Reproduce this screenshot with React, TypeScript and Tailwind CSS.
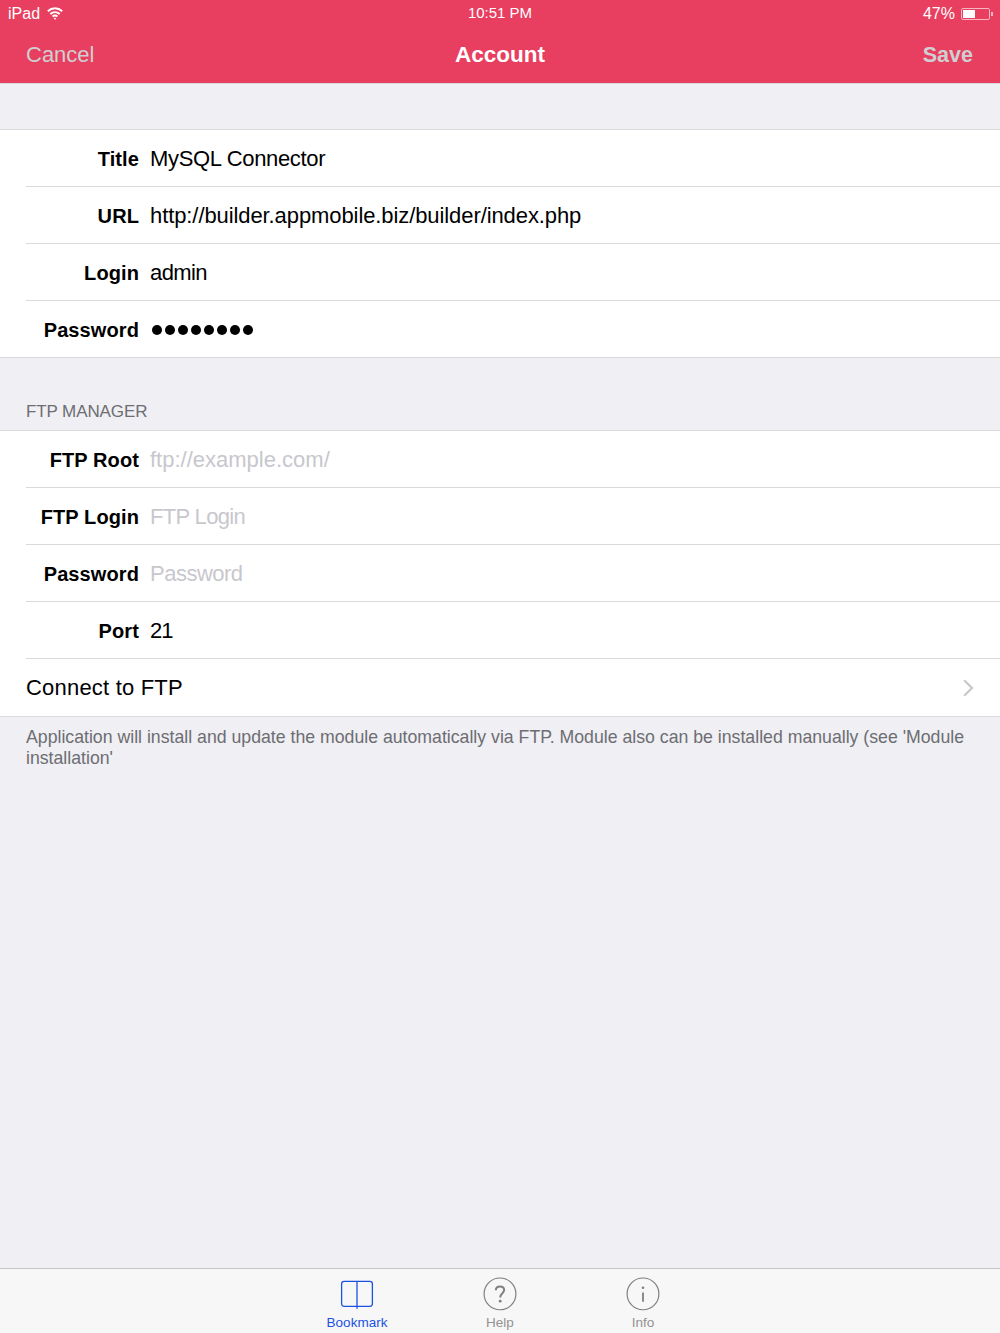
import React from 'react';

const SANS = "font-['Liberation_Sans',Arial,sans-serif]";

type RowProps = {
  label: string;
  value?: string;
  placeholder?: string;
  dots?: boolean;
  last?: boolean;
  track?: string;
};

function Row({ label, value, placeholder, dots, last, track = '' }: RowProps) {
  return (
    <div className="pl-[26px]">
      <div className={`flex items-center ${last ? 'h-[56px]' : 'h-[57px] border-b border-[#d9d9dc]'}`}>
        <div className="w-[113px] text-right text-[20px] tracking-[0.1px] font-bold text-black shrink-0 pt-[1px]">{label}</div>
        <div className={`ml-[11px] text-[22px] pt-[1px] ${track}`}>
          {dots ? (
            <div className="flex gap-[3px] ml-[2px]">
              {[0, 1, 2, 3, 4, 5, 6, 7].map(i => (
                <span key={i} className="block w-[10px] h-[10px] rounded-full bg-black" />
              ))}
            </div>
          ) : value ? (
            <span className="text-black">{value}</span>
          ) : (
            <span className="text-[#c7c7cd]">{placeholder}</span>
          )}
        </div>
      </div>
    </div>
  );
}

export default function App() {
  return (
    <div className={`${SANS} w-[1000px] h-[1333px] bg-[#efeff4] flex flex-col overflow-hidden`}>
      {/* Header */}
      <div className="h-[84px] bg-[#e83e5f] border-b border-[#d8d8de] shrink-0">
        <div className="h-[27px] flex items-center justify-between pl-[8px] pr-[7px] text-[16px] text-white relative">
          <div className="flex items-center gap-[7px]">
            <span>iPad</span>
            <svg width="16" height="13" viewBox="0 0 16 13" fill="none" stroke="white" strokeWidth="2">
              <path d="M0.8 4.2C5 0.4 11 0.4 15.2 4.2" />
              <path d="M3.3 7C6 4.6 10 4.6 12.7 7" />
              <path d="M5.6 9.5C7 8.4 9 8.4 10.4 9.5" />
              <circle cx="8" cy="11.6" r="0.6" fill="white" strokeWidth="1" />
            </svg>
          </div>
          <span className="absolute left-0 right-0 text-center text-[15px]">10:51 PM</span>
          <div className="flex items-center gap-[6px]">
            <span>47%</span>
            <div className="flex items-center">
              <div className="w-[29px] h-[12px] border border-[#f7b5c2] rounded-[2px] p-[1px]">
                <div className="w-[12px] h-full bg-white" />
              </div>
              <div className="w-[2px] h-[4px] bg-[#f7b5c2] ml-[1px]" />
            </div>
          </div>
        </div>
        <div className="h-[56px] flex items-center justify-between pl-[26px] pr-[27px] relative leading-[32px]">
          <span className="text-[#cfcfd2] text-[22px]">Cancel</span>
          <span className="absolute left-0 right-0 text-center text-white font-bold text-[22.5px]">Account</span>
          <span className="text-[#cfcfd2] font-bold text-[21.5px]">Save</span>
        </div>
      </div>

      <div className="h-[45px] shrink-0" />

      {/* Account group */}
      <div className="bg-white border-y border-[#d9d9dc] shrink-0">
        <Row label="Title" value="MySQL Connector" track="tracking-[-0.33px]" />
        <Row label="URL" value="http://builder.appmobile.biz/builder/index.php" track="tracking-[-0.09px]" />
        <Row label="Login" value="admin" track="tracking-[-0.6px]" />
        <Row label="Password" dots last />
      </div>

      <div className="h-[72px] shrink-0 flex items-end px-[26px] pb-[6px] text-[17px] tracking-[-0.1px] text-[#6d6d72]">FTP MANAGER</div>

      {/* FTP group */}
      <div className="bg-white border-y border-[#d9d9dc] shrink-0">
        <Row label="FTP Root" placeholder="ftp://example.com/" />
        <Row label="FTP Login" placeholder="FTP Login" track="tracking-[-0.67px]" />
        <Row label="Password" placeholder="Password" track="tracking-[-0.5px]" />
        <Row label="Port" value="21" track="tracking-[-1px]" />
        <div className="h-[57px] pl-[26px] pr-[26px] flex items-center justify-between text-[22px] tracking-[0.2px] text-black">
          <span>Connect to FTP</span>
          <svg width="11" height="18" viewBox="0 0 11 18" fill="none" stroke="#c7c7cc" strokeWidth="2.2">
            <path d="M1.2 1.2L9 9L1.2 16.8" />
          </svg>
        </div>
      </div>

      <div className="px-[26px] pt-[10px] text-[17.7px] leading-[21px] text-[#6d6d72] shrink-0">
        Application will install and update the module automatically via FTP. Module also can be installed manually (see 'Module installation'
      </div>

      <div className="flex-1" />

      {/* Tab bar */}
      <div className="h-[65px] bg-[#f7f7f7] border-t border-[#c4c4c6] shrink-0 flex justify-center gap-[63px] text-[13.5px]">
        <div className="w-[80px] flex flex-col items-center pt-[8px] text-[#1c52e0]">
          <svg width="34" height="34" viewBox="0 0 34 34" fill="none" stroke="#1c52e0" strokeWidth="1.3">
            <rect x="1.5" y="4.5" width="31" height="25" rx="2.5" />
            <path d="M17 4.5V32" />
          </svg>
          <span className="mt-[2px] whitespace-nowrap">Bookmark</span>
        </div>
        <div className="w-[80px] flex flex-col items-center pt-[8px] text-[#929292]">
          <svg width="34" height="34" viewBox="0 0 34 34" fill="none" stroke="#7f7f7f" strokeWidth="1.2">
            <circle cx="17" cy="17" r="16" />
            <path d="M12.8 13.4C12.8 11 14.6 9.6 17 9.6C19.4 9.6 21.2 11 21.2 13.2C21.2 16.2 17.2 16.6 17.2 20.6" strokeWidth="2" />
            <circle cx="17.2" cy="24.4" r="1.4" fill="#7f7f7f" stroke="none" />
          </svg>
          <span className="mt-[2px]">Help</span>
        </div>
        <div className="w-[80px] flex flex-col items-center pt-[8px] text-[#929292]">
          <svg width="34" height="34" viewBox="0 0 34 34" fill="none" stroke="#7f7f7f" strokeWidth="1.2">
            <circle cx="17" cy="17" r="16" />
            <path d="M17 15.5V25" strokeWidth="1.8" />
            <circle cx="17" cy="10.8" r="1.3" fill="#7f7f7f" stroke="none" />
          </svg>
          <span className="mt-[2px]">Info</span>
        </div>
      </div>
    </div>
  );
}
